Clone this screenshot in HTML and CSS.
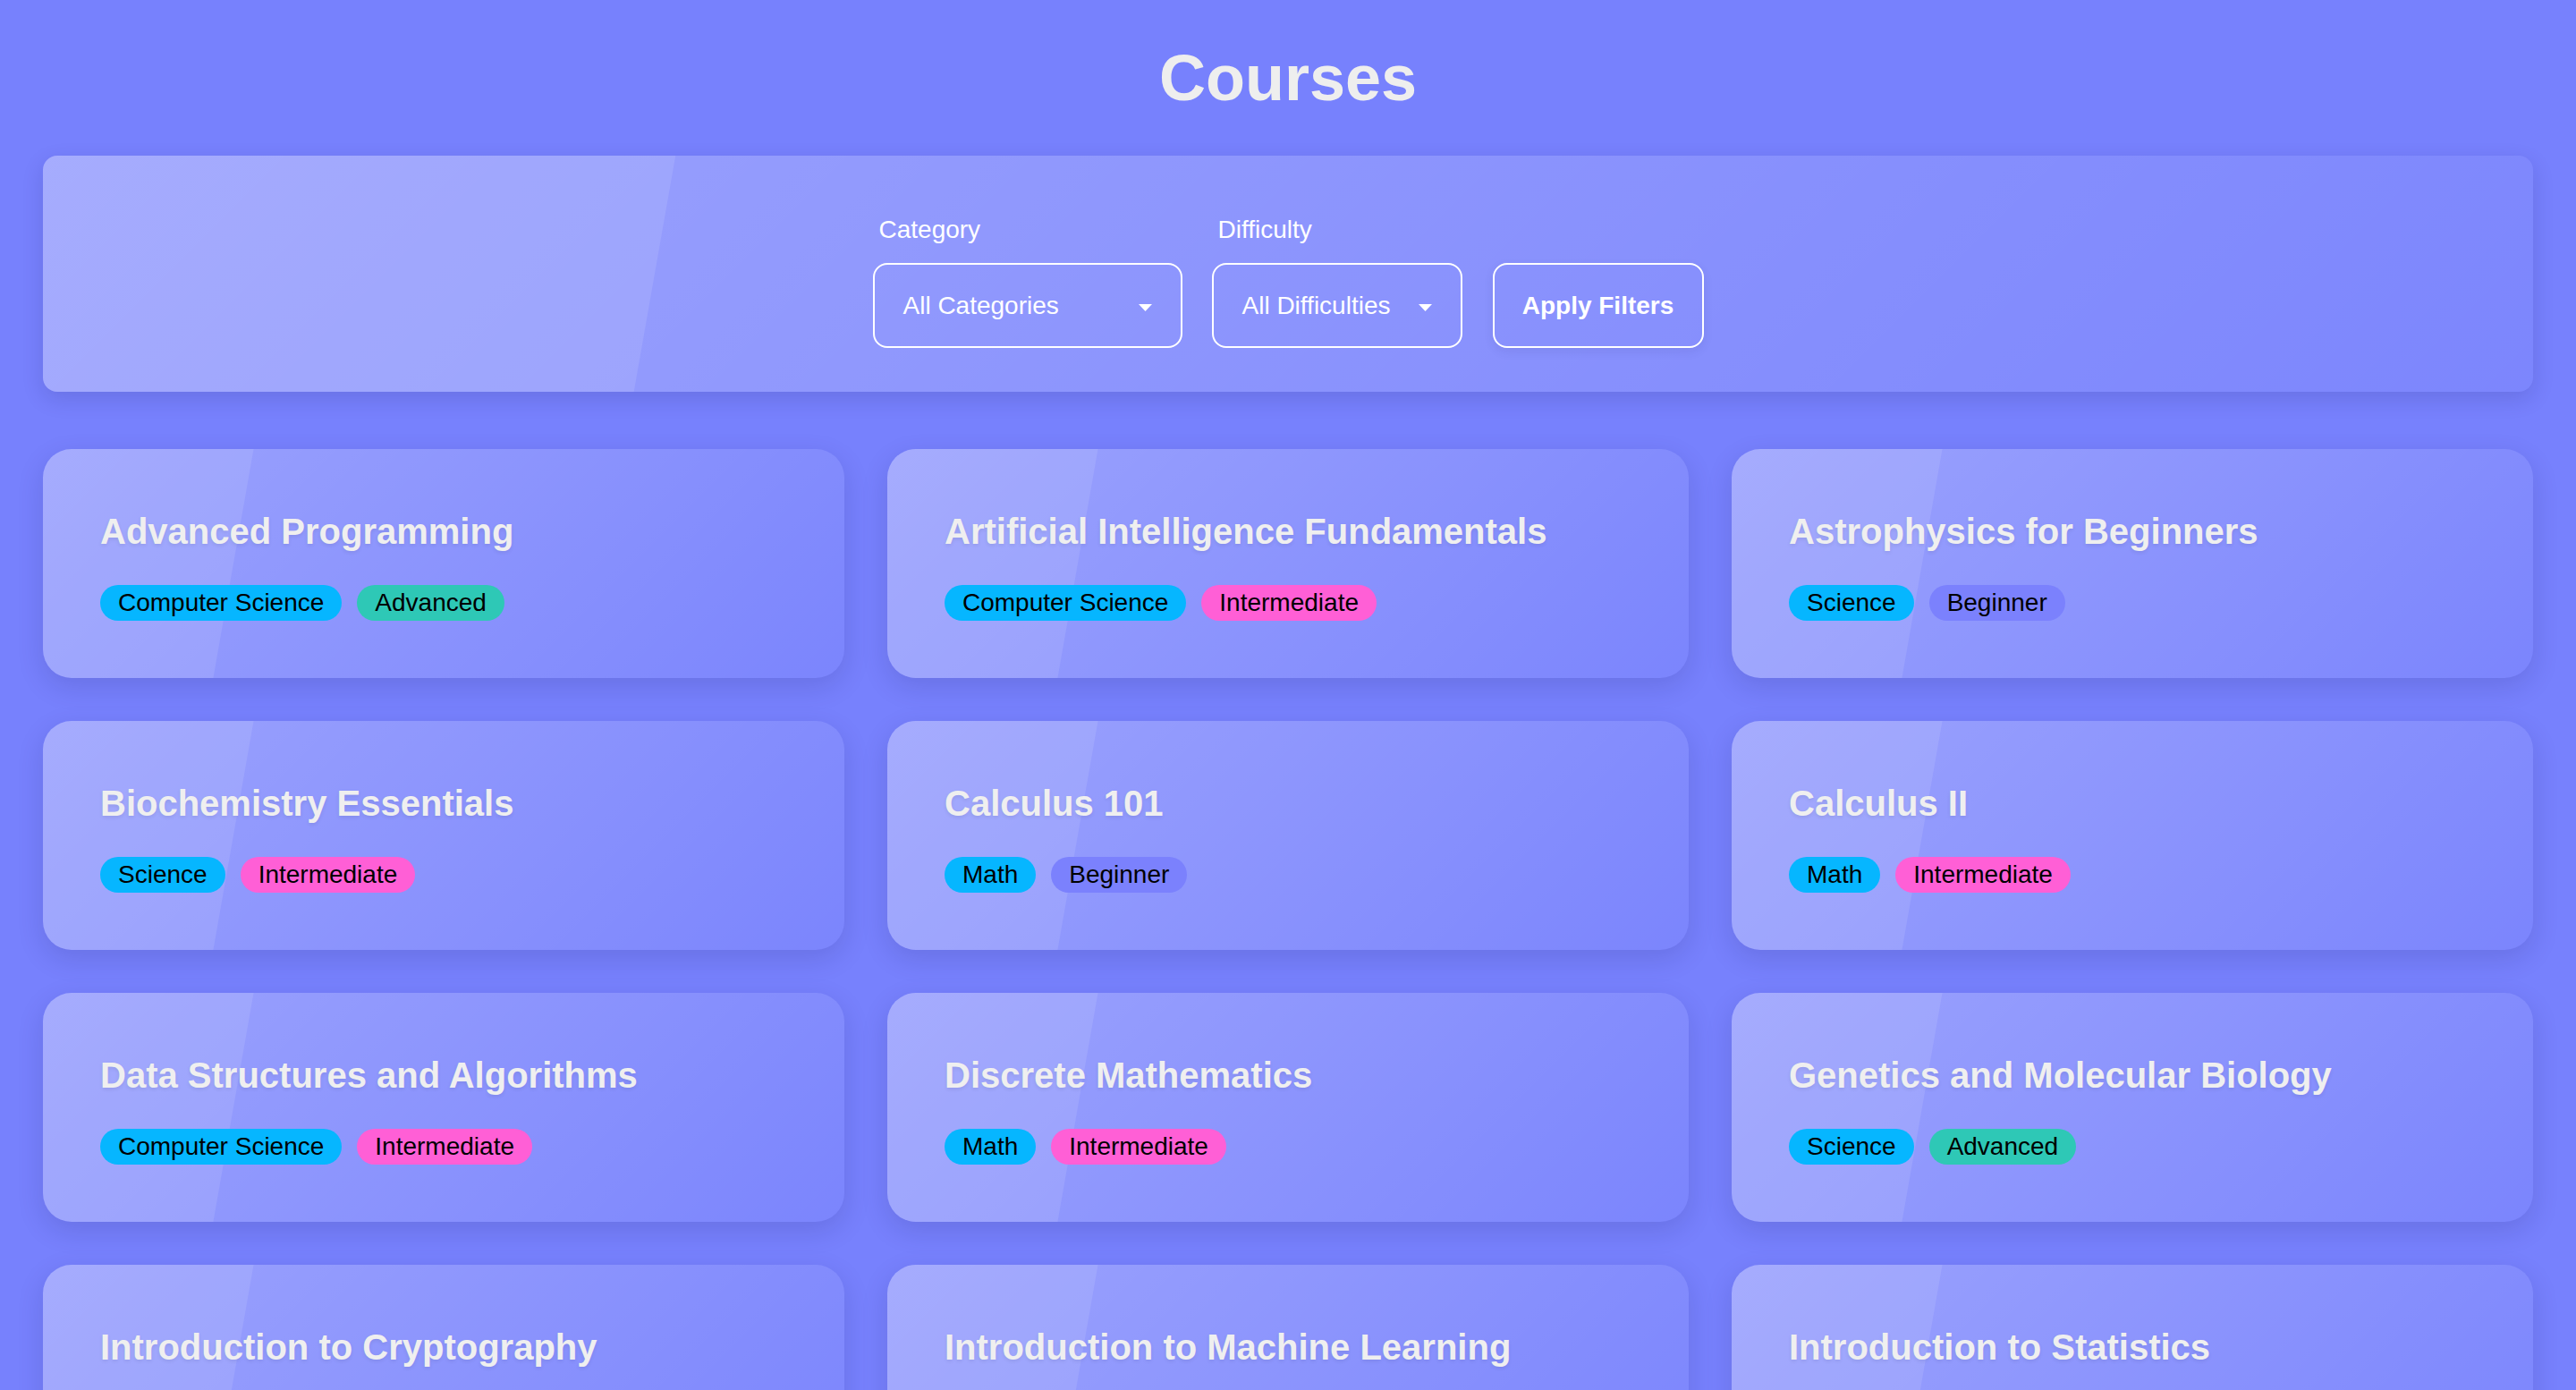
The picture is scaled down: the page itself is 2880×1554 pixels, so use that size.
FILE: index.html
```html
<!DOCTYPE html>
<html lang="en">
<head>
<meta charset="utf-8">
<title>Courses</title>
<link rel="stylesheet" href="styles.css">
</head>
<body>
<main class="page">
  <h1 class="page-title">Courses</h1>

  <section class="filters">
    <div class="filter-row">
      <div class="field">
        <label class="field-label">Category</label>
        <div class="select select-category">
          <span class="select-text">All Categories</span>
          <svg class="select-arrow" width="15" height="8" viewBox="0 0 15 8"><path d="M0 0H15L7.5 8Z" fill="#ffffff"/></svg>
        </div>
      </div>
      <div class="field">
        <label class="field-label">Difficulty</label>
        <div class="select select-difficulty">
          <span class="select-text">All Difficulties</span>
          <svg class="select-arrow" width="15" height="8" viewBox="0 0 15 8"><path d="M0 0H15L7.5 8Z" fill="#ffffff"/></svg>
        </div>
      </div>
      <button class="apply-btn" type="button">Apply Filters</button>
    </div>
  </section>

  <section class="grid">
    <article class="card">
      <h3 class="card-title">Advanced Programming</h3>
      <div class="tags"><span class="tag tag-blue">Computer Science</span><span class="tag tag-teal">Advanced</span></div>
    </article>
    <article class="card">
      <h3 class="card-title">Artificial Intelligence Fundamentals</h3>
      <div class="tags"><span class="tag tag-blue">Computer Science</span><span class="tag tag-pink">Intermediate</span></div>
    </article>
    <article class="card">
      <h3 class="card-title">Astrophysics for Beginners</h3>
      <div class="tags"><span class="tag tag-blue">Science</span><span class="tag tag-violet">Beginner</span></div>
    </article>
    <article class="card">
      <h3 class="card-title">Biochemistry Essentials</h3>
      <div class="tags"><span class="tag tag-blue">Science</span><span class="tag tag-pink">Intermediate</span></div>
    </article>
    <article class="card">
      <h3 class="card-title">Calculus 101</h3>
      <div class="tags"><span class="tag tag-blue">Math</span><span class="tag tag-violet">Beginner</span></div>
    </article>
    <article class="card">
      <h3 class="card-title">Calculus II</h3>
      <div class="tags"><span class="tag tag-blue">Math</span><span class="tag tag-pink">Intermediate</span></div>
    </article>
    <article class="card">
      <h3 class="card-title">Data Structures and Algorithms</h3>
      <div class="tags"><span class="tag tag-blue">Computer Science</span><span class="tag tag-pink">Intermediate</span></div>
    </article>
    <article class="card">
      <h3 class="card-title">Discrete Mathematics</h3>
      <div class="tags"><span class="tag tag-blue">Math</span><span class="tag tag-pink">Intermediate</span></div>
    </article>
    <article class="card">
      <h3 class="card-title">Genetics and Molecular Biology</h3>
      <div class="tags"><span class="tag tag-blue">Science</span><span class="tag tag-teal">Advanced</span></div>
    </article>
    <article class="card">
      <h3 class="card-title">Introduction to Cryptography</h3>
      <div class="tags"><span class="tag tag-blue">Computer Science</span><span class="tag tag-pink">Intermediate</span></div>
    </article>
    <article class="card">
      <h3 class="card-title">Introduction to Machine Learning</h3>
      <div class="tags"><span class="tag tag-blue">Computer Science</span><span class="tag tag-pink">Intermediate</span></div>
    </article>
    <article class="card">
      <h3 class="card-title">Introduction to Statistics</h3>
      <div class="tags"><span class="tag tag-blue">Math</span><span class="tag tag-violet">Beginner</span></div>
    </article>
  </section>
</main>
</body>
</html>
```

FILE: styles.css
```css
* {
  box-sizing: border-box;
}

html, body {
  margin: 0;
  padding: 0;
}

body {
  background: #7781fd;
  font-family: "Liberation Sans", Arial, Helvetica, sans-serif;
  color: #ffffff;
}

.page {
  padding: 46px 48px 64px;
}

.page-title {
  margin: 0 0 45px;
  font-size: 72px;
  line-height: 83px;
  font-weight: 700;
  text-align: center;
  color: #eeeeee;
}

.filters {
  position: relative;
  overflow: hidden;
  border-radius: 16px;
  padding: 64px 0 49px;
  background: linear-gradient(135deg, rgba(255, 255, 255, 0.27) 0%, rgba(255, 255, 255, 0.04) 100%);
  box-shadow: 0 8px 24px rgba(20, 20, 80, 0.14);
}

.filters::before {
  content: "";
  position: absolute;
  top: 0;
  bottom: 0;
  left: -300px;
  width: 984px;
  transform: skewX(-10deg);
  background: rgba(255, 255, 255, 0.1);
  pointer-events: none;
}

.filter-row {
  position: relative;
  display: flex;
  justify-content: center;
  align-items: flex-end;
  gap: 33px;
}

.field {
  display: flex;
  flex-direction: column;
}

.field-label {
  font-size: 28px;
  line-height: 38px;
  margin-bottom: 18px;
  padding-left: 7px;
  color: #ffffff;
}

.select {
  display: flex;
  align-items: center;
  justify-content: space-between;
  height: 95px;
  padding: 0 32px;
  border: 2px solid #ffffff;
  border-radius: 16px;
  font-size: 28px;
  color: #ffffff;
}

.select-category {
  width: 346px;
}

.select-difficulty {
  width: 280px;
}

.select-arrow {
  margin-top: 4px;
  flex: none;
}

.apply-btn {
  width: 236px;
  height: 95px;
  margin-left: 1px;
  padding: 0;
  border: 2px solid #ffffff;
  border-radius: 16px;
  background: transparent;
  color: #ffffff;
  font-family: "Liberation Sans", Arial, Helvetica, sans-serif;
  font-size: 28px;
  font-weight: 700;
  box-shadow: 0 4px 12px rgba(20, 20, 80, 0.08);
}

.grid {
  display: grid;
  grid-template-columns: repeat(3, 1fr);
  gap: 48px;
  margin-top: 64px;
}

.card {
  position: relative;
  overflow: hidden;
  height: 256px;
  padding: 64px;
  border-radius: 32px;
  background: linear-gradient(135deg, rgba(255, 255, 255, 0.27) 0%, rgba(255, 255, 255, 0.03) 100%);
  box-shadow: 0 10px 30px rgba(20, 20, 80, 0.14);
}

.card::before {
  content: "";
  position: absolute;
  top: 0;
  bottom: 0;
  left: -200px;
  width: 413px;
  transform: skewX(-10deg);
  background: rgba(255, 255, 255, 0.1);
  pointer-events: none;
}

.card-title {
  position: relative;
  margin: 0 0 32px;
  font-size: 40px;
  line-height: 56px;
  font-weight: 700;
  color: #efefef;
  white-space: nowrap;
  text-shadow: 0 2px 4px rgba(0, 0, 0, 0.08);
}

.tags {
  position: relative;
  display: flex;
  gap: 17px;
}

.tag {
  height: 40px;
  padding: 0 20px;
  border-radius: 20px;
  font-size: 28px;
  line-height: 40px;
  color: #000000;
  white-space: nowrap;
}

.tag-blue {
  background: #06b6ff;
}

.tag-teal {
  background: #2ec8b6;
}

.tag-pink {
  background: #ff5fd6;
}

.tag-violet {
  background: #7b81fd;
}
```
